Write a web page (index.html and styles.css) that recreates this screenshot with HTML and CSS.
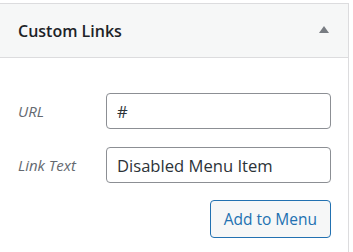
FILE: index.html
```html
<!DOCTYPE html>
<html>
<head>
<meta charset="utf-8">
<link rel="stylesheet" href="styles.css">
</head>
<body>
<div class="panel">
  <div class="panel-header">
    <h3 class="panel-title">Custom Links</h3>
    <span class="toggle" aria-hidden="true"></span>
  </div>
  <div class="panel-body">
    <div class="form-grid">
      <label class="field-label" for="url">URL</label>
      <input class="field-input" id="url" type="text" value="#">
      <label class="field-label" for="text">Link Text</label>
      <input class="field-input" id="text" type="text" value="Disabled Menu Item">
    </div>
    <div class="actions">
      <button class="btn" type="button">Add to Menu</button>
    </div>
  </div>
</div>
</body>
</html>
```

FILE: styles.css
```css
* { box-sizing: border-box; }
html, body { margin: 0; padding: 0; background: #fff; }
body {
  font-family: "Open Sans", "Noto Sans", sans-serif;
  color: #1d2327;
  padding-top: 3px;
  overflow: hidden;
}
.panel {
  width: 350px;
  margin-left: -1px;
  border: 1px solid #dcdcde;
  background: #fff;
  height: 260px;
}
.panel-header {
  height: 54px;
  background: #f6f7f7;
  border-bottom: 1px solid #dcdcde;
  display: flex;
  align-items: center;
  justify-content: space-between;
  padding: 0 19px 0 18px;
}
.panel-title {
  margin: 0;
  font-size: 16px;
  font-weight: 600;
  color: #1d2327;
}
.toggle {
  width: 0;
  height: 0;
  border-left: 5px solid transparent;
  border-right: 5px solid transparent;
  border-bottom: 7px solid #787c82;
  margin-top: -2px;
}
.panel-body {
  padding: 35px 17px 0 18px;
}
.form-grid {
  display: grid;
  grid-template-columns: 88px 225px;
  row-gap: 18px;
  align-items: center;
}
.field-label {
  font-style: italic;
  font-size: 15px;
  color: #646970;
}
.field-input {
  height: 36px;
  width: 225px;
  border: 1px solid #8c8f94;
  border-radius: 4px;
  padding: 0 10px;
  font-family: inherit;
  font-size: 16.6px;
  color: #2c3338;
  background: #fff;
  outline: none;
}
.actions {
  display: flex;
  justify-content: flex-end;
  margin-top: 17px;
}
.btn {
  height: 38px;
  padding: 0 13px;
  border: 1px solid #2271b1;
  border-radius: 4px;
  background: #f6f7f7;
  color: #2271b1;
  font-family: inherit;
  font-size: 15.5px;
}
```
